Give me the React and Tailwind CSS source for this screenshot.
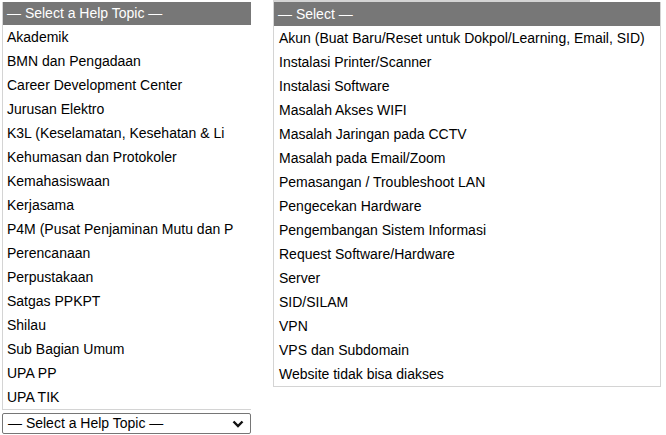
const leftTopics = [
  "Akademik",
  "BMN dan Pengadaan",
  "Career Development Center",
  "Jurusan Elektro",
  "K3L (Keselamatan, Kesehatan & Li",
  "Kehumasan dan Protokoler",
  "Kemahasiswaan",
  "Kerjasama",
  "P4M (Pusat Penjaminan Mutu dan P",
  "Perencanaan",
  "Perpustakaan",
  "Satgas PPKPT",
  "Shilau",
  "Sub Bagian Umum",
  "UPA PP",
  "UPA TIK",
];

const rightTopics = [
  "Akun (Buat Baru/Reset untuk Dokpol/Learning, Email, SID)",
  "Instalasi Printer/Scanner",
  "Instalasi Software",
  "Masalah Akses WIFI",
  "Masalah Jaringan pada CCTV",
  "Masalah pada Email/Zoom",
  "Pemasangan / Troubleshoot LAN",
  "Pengecekan Hardware",
  "Pengembangan Sistem Informasi",
  "Request Software/Hardware",
  "Server",
  "SID/SILAM",
  "VPN",
  "VPS dan Subdomain",
  "Website tidak bisa diakses",
];

function Chevron() {
  return (
    <svg width="12" height="8" viewBox="0 0 12 8" className="mr-[6px]">
      <path d="M1.5 1.5 L6 6 L10.5 1.5" fill="none" stroke="#111" strokeWidth="2.4" />
    </svg>
  );
}

export default function App() {
  return (
    <div
      className="relative h-[435px] w-[666px] overflow-hidden bg-white text-[14px] text-black"
      style={{ fontFamily: '"Liberation Sans", Arial, sans-serif' }}
    >
      <div className="flex items-start">
        <div className="ml-[2px] mt-[2px] flex w-[249px] flex-col">
          <div className="flex w-[249px] flex-col overflow-hidden border-b border-l border-[#d4d4d4]">
            <div className="h-[23px] whitespace-nowrap bg-[#777777] pl-[4px] leading-[23px] text-white">
              — Select a Help Topic —
            </div>
            {leftTopics.map((t) => (
              <div key={t} className="h-[24px] whitespace-nowrap pl-[4px] leading-[24px]">
                {t}
              </div>
            ))}
          </div>
          <div className="mt-[3px] flex h-[21px] items-center justify-between rounded-[2px] border border-[#767676] pl-[5px] leading-[19px]">
            <span>— Select a Help Topic —</span>
            <Chevron />
          </div>
        </div>

        <div className="relative ml-[22px] mt-[2px] flex w-[388px] flex-col border border-t-0 border-[#d4d4d4]">
          <div className="absolute -left-px -top-[2px] h-[2px] w-[317px] bg-[#d4d4d4]" />
          <div className="h-[24px] whitespace-nowrap bg-[#777777] pl-[4px] leading-[24px] text-white">
            — Select —
          </div>
          {rightTopics.map((t) => (
            <div key={t} className="h-[24px] whitespace-nowrap pl-[5px] leading-[24px]">
              {t}
            </div>
          ))}
        </div>
      </div>
    </div>
  );
}
